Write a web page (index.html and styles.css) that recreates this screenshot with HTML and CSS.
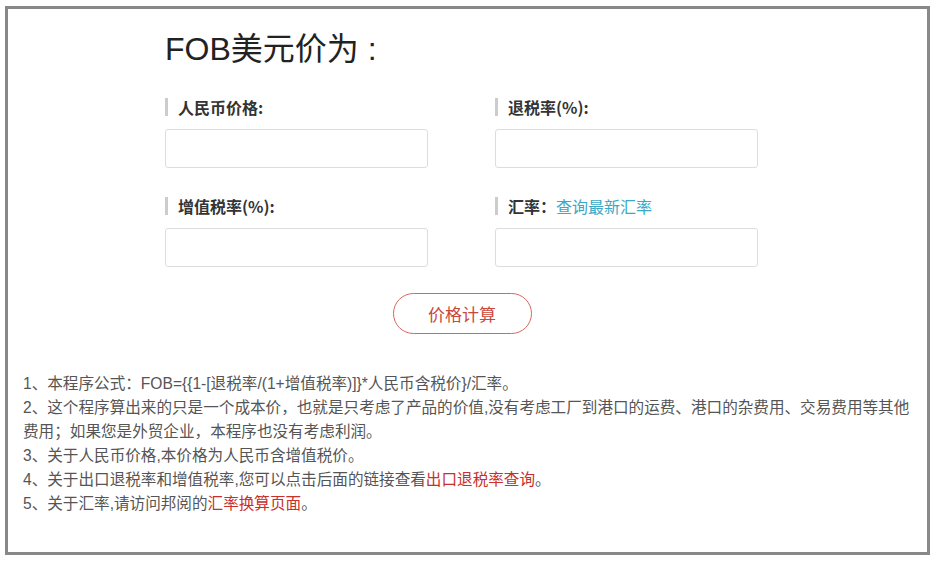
FILE: index.html
```html
<!DOCTYPE html>
<html lang="zh-CN">
<head>
    <meta charset="UTF-8">
    <meta name="viewport" content="width=device-width, initial-scale=1.0">
    <title>FOB价格计算</title>
    <link rel="stylesheet" href="styles.css">
</head>
<body>
    <div class="frame">
        <div class="calc">
            <h2 class="title">FOB美元价为 :</h2>
            <div class="fields">
                <div class="field">
                    <label class="label">人民币价格:</label>
                    <input type="text" class="input">
                </div>
                <div class="field">
                    <label class="label">退税率(%):</label>
                    <input type="text" class="input">
                </div>
                <div class="field">
                    <label class="label">增值税率(%):</label>
                    <input type="text" class="input">
                </div>
                <div class="field">
                    <label class="label">汇率：<a href="#" class="rate-link">查询最新汇率</a></label>
                    <input type="text" class="input">
                </div>
            </div>
            <div class="actions">
                <button class="calc-btn">价格计算</button>
            </div>
        </div>

        <!-- 说明 -->
        <div class="notes">
            <p>1、本程序公式：FOB={{1-[退税率/(1+增值税率)]}*人民币含税价}/汇率。</p>
            <p>2、这个程序算出来的只是一个成本价，也就是只考虑了产品的价值,没有考虑工厂到港口的运费、港口的杂费用、交易费用等其他费用；如果您是外贸企业，本程序也没有考虑利润。</p>
            <p>3、关于人民币价格,本价格为人民币含增值税价。</p>
            <p>4、关于出口退税率和增值税率,您可以点击后面的链接查看<a href="#" class="note-link">出口退税率查询</a>。</p>
            <p>5、关于汇率,请访问邦阅的<a href="#" class="note-link">汇率换算页面</a>。</p>
        </div>
    </div>
</body>
</html>
```

FILE: styles.css
```css
body {
    margin: 0;
    background: #fff;
    font-family: "Noto Sans CJK SC", "Liberation Sans", sans-serif;
}
.frame {
    margin: 6px 0 0 5px;
    width: 919px;
    height: 543px;
    border: 3px solid #888;
    box-sizing: content-box;
}
.calc {
    padding-left: 157px;
}
.title {
    margin: 0;
    padding-top: 18px;
    font-family: "Liberation Sans", "Noto Sans CJK SC", sans-serif;
    font-size: 32px;
    font-weight: normal;
    line-height: 44px;
    color: #222;
}
.fields {
    display: grid;
    grid-template-columns: 263px 263px;
    column-gap: 67px;
    row-gap: 29px;
    margin-top: 27px;
}
.field {
    display: flex;
    flex-direction: column;
}
.label {
    border-left: 3px solid #ccc;
    padding-left: 10px;
    height: 18px;
    line-height: 18px;
    font-size: 16px;
    font-weight: bold;
    color: #333;
    margin-bottom: 13px;
}
.rate-link {
    font-weight: normal;
    color: #3aa8c6;
    text-decoration: none;
}
.input {
    box-sizing: border-box;
    width: 263px;
    height: 39px;
    border: 1px solid #ddd;
    border-radius: 3px;
    background: #fff;
    outline: none;
}
.actions {
    width: 594px;
    display: flex;
    justify-content: center;
    margin-top: 26px;
}
.calc-btn {
    width: 139px;
    height: 41px;
    border: 1px solid #d6675d;
    border-radius: 21px;
    background: #fff;
    color: #c9473d;
    font-family: inherit;
    font-size: 17px;
    cursor: pointer;
}
.notes {
    padding: 0 8px 0 15px;
    margin-top: 38px;
    font-family: "Liberation Sans", "Noto Sans CJK SC", sans-serif;
    font-size: 15.6px;
    line-height: 24px;
    color: #555;
}
.notes p {
    margin: 0;
}
.note-link {
    color: #c9302c;
    text-decoration: none;
}
```
